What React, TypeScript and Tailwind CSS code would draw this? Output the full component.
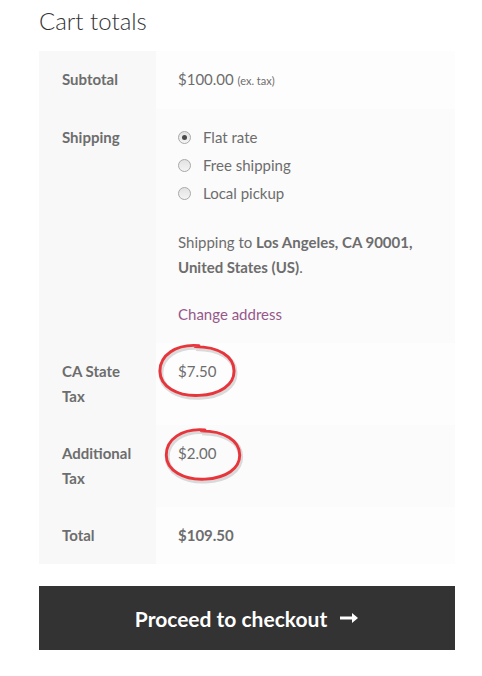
import React from "react";

const font = { fontFamily: '"Source Sans Pro", Lato, "Noto Sans", sans-serif' };

function Radio({ checked }: { checked?: boolean }) {
  return (
    <span className="w-[13px] h-[13px] rounded-full border border-[#a9a9a9] bg-gradient-to-b from-[#e2e2e2] to-[#f4f4f4] flex items-center justify-center shrink-0">
      {checked && <span className="w-[5px] h-[5px] rounded-full bg-[#4a4a4a]" />}
    </span>
  );
}

function Ellipse({ className }: { className: string }) {
  return (
    <svg className={className} viewBox="0 0 84 60" fill="none">
      <path
        d="M44 4 C20 2 4 14 4 30 C4 46 22 56 44 55 C66 54 80 44 80 30 C80 15 64 5 40 5"
        stroke="#8a8a8a"
        strokeOpacity="0.3"
        strokeWidth="5"
        transform="translate(1 2)"
      />
      <path
        d="M44 4 C20 2 4 14 4 30 C4 46 22 56 44 55 C66 54 80 44 80 30 C80 15 64 5 40 5"
        stroke="#e8353b"
        strokeWidth="3"
        strokeLinecap="round"
      />
    </svg>
  );
}

export default function App() {
  const th = "bg-[#f8f8f8] px-[23px] py-4 text-left align-top font-bold";
  const td = "px-[22px] py-4 align-top";
  return (
    <div className="min-h-screen bg-white text-[#6d6d6d] text-[15px] leading-[25px]" style={font}>
      <div className="w-[416px] ml-[39px] pt-[3px]">
        <h2 className="text-[24px] leading-[36px] font-light text-[#333333] mb-[12px]">Cart totals</h2>

        <div className="relative">
          <table className="w-full border-collapse table-fixed">
            <colgroup>
              <col className="w-[117px]" />
              <col />
            </colgroup>
            <tbody>
              <tr>
                <th className={th}>Subtotal</th>
                <td className={`${td} bg-[#fdfdfd]`}>
                  $100.00 <small className="text-[11px]">(ex. tax)</small>
                </td>
              </tr>
              <tr>
                <th className={th}>Shipping</th>
                <td className={`${td} bg-[#fbfbfb]`}>
                  <ul className="mb-[24px]">
                    <li className="flex items-center gap-[12px] mb-[3px]">
                      <Radio checked />
                      <span>Flat rate</span>
                    </li>
                    <li className="flex items-center gap-[12px] mb-[3px]">
                      <Radio />
                      <span>Free shipping</span>
                    </li>
                    <li className="flex items-center gap-[12px]">
                      <Radio />
                      <span>Local pickup</span>
                    </li>
                  </ul>
                  <p className="mb-[22px]">
                    Shipping to <strong className="font-bold">Los Angeles, CA 90001, United States (US)</strong>.
                  </p>
                  <a className="text-[#96588a]">Change address</a>
                </td>
              </tr>
              <tr>
                <th className={th}>CA State Tax</th>
                <td className={`${td} bg-[#fdfdfd]`}>$7.50</td>
              </tr>
              <tr>
                <th className={th}>Additional Tax</th>
                <td className={`${td} bg-[#fbfbfb]`}>$2.00</td>
              </tr>
              <tr>
                <th className={th}>Total</th>
                <td className={`${td} bg-[#fdfdfd] font-bold`}>$109.50</td>
              </tr>
            </tbody>
          </table>
          <Ellipse className="absolute left-[117px] top-[290px] w-[82px] h-[60px]" />
          <Ellipse className="absolute left-[123px] top-[375px] w-[82px] h-[58px]" />
        </div>

        <button className="mt-[22px] w-full h-[64px] bg-[#333333] text-white text-[21px] font-bold flex items-center justify-center gap-[12px]">
          <span>Proceed to checkout</span>
          <svg width="20" height="12" viewBox="0 0 20 12" fill="none">
            <path d="M1 6 H15" stroke="white" strokeWidth="3" />
            <path d="M13 1 L19 6 L13 11 Z" fill="white" />
          </svg>
        </button>
      </div>
    </div>
  );
}
